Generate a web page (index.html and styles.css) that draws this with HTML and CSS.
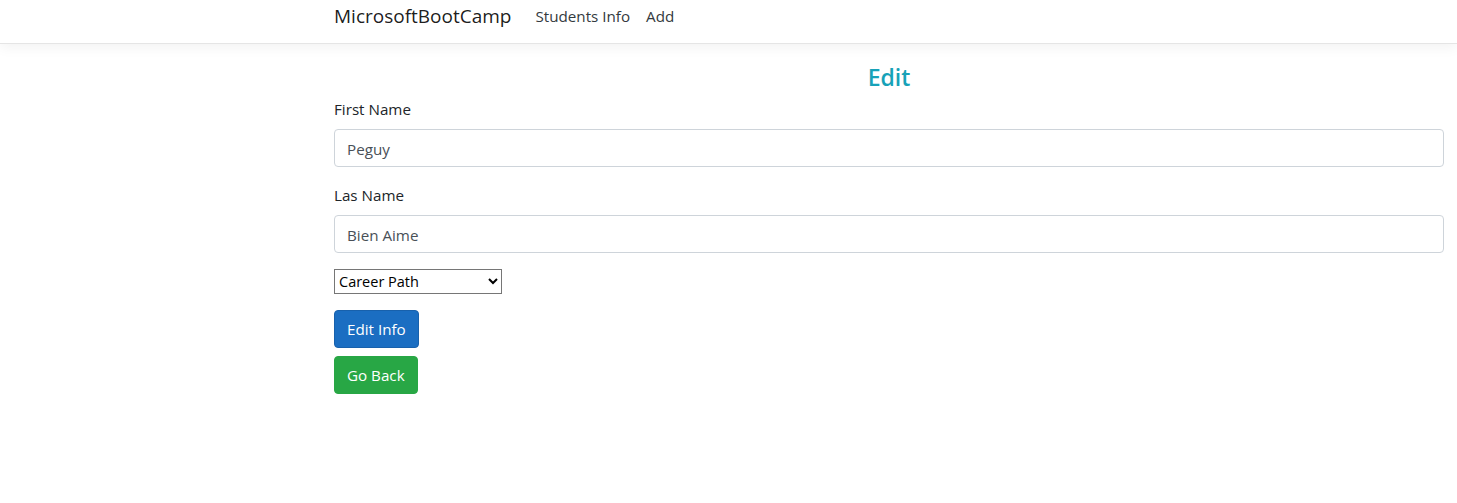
FILE: index.html
```html
<!DOCTYPE html>
<html lang="en">
<head>
<meta charset="utf-8">
<title>Edit - MicrosoftBootCamp</title>
<link rel="stylesheet" href="styles.css">
</head>
<body>
<header class="navbar">
  <div class="container nav-inner">
    <a class="brand" href="#">MicrosoftBootCamp</a>
    <nav class="nav-links">
      <a class="nav-link" href="#">Students Info</a>
      <a class="nav-link" href="#">Add</a>
    </nav>
  </div>
</header>
<main class="container">
  <h4 class="title">Edit</h4>
  <form class="form">
    <div class="form-group">
      <label class="label" for="fn">First Name</label>
      <input class="control" id="fn" type="text" value="Peguy">
    </div>
    <div class="form-group">
      <label class="label" for="ln">Las Name</label>
      <input class="control" id="ln" type="text" value="Bien Aime">
    </div>
    <div class="form-group">
      <select class="select">
        <option>Career Path</option>
      </select>
    </div>
    <div class="actions">
      <button class="btn btn-primary" type="button">Edit Info</button>
      <button class="btn btn-success" type="button">Go Back</button>
    </div>
  </form>
</main>
</body>
</html>
```
FILE: styles.css
```css
html, body {
  overflow-x: hidden;
}
body {
  margin: 0;
  font-family: "Open Sans", "Noto Sans", sans-serif;
  font-size: 15.2px;
  line-height: 24px;
  color: #212529;
  background: #fff;
}
.container {
  box-sizing: border-box;
  width: 1140px;
  margin-left: 319px;
  padding: 0 15px;
}
.navbar {
  background: #fff;
  border-bottom: 1px solid #e5e5e5;
  box-shadow: 0 4px 12px rgba(0, 0, 0, 0.05);
  height: 44px;
  box-sizing: border-box;
}
.nav-inner {
  display: flex;
  align-items: center;
  height: 100%;
  padding-bottom: 12px;
}
.brand {
  font-size: 19px;
  line-height: 30px;
  color: rgba(0, 0, 0, 0.9);
  text-decoration: none;
  margin-right: 16px;
}
.nav-links {
  display: flex;
}
.nav-link {
  padding: 0 8px;
  color: #343a40;
  text-decoration: none;
}
.title {
  margin: 16px 0 3px;
  font-size: 23px;
  font-weight: 600;
  line-height: 34px;
  color: #17a2b8;
  text-align: center;
}
.form {
  margin: 0;
}
.form-group {
  margin-bottom: 16px;
}
.label {
  display: inline-block;
  margin-bottom: 8px;
}
.control {
  display: block;
  box-sizing: border-box;
  width: 100%;
  height: 38px;
  padding: 6px 12px 5px;
  font: inherit;
  color: #495057;
  background: #fff;
  border: 1px solid #ced4da;
  border-radius: 4px;
}
.select {
  box-sizing: border-box;
  width: 168px;
  height: 25px;
  font-family: inherit;
  font-size: 14.5px;
  color: #000;
  background: #fff;
  border: 1px solid #767676;
  border-radius: 0;
}
.actions {
  display: flex;
  flex-direction: column;
  align-items: flex-start;
  gap: 8px;
}
.btn {
  box-sizing: border-box;
  height: 38px;
  padding: 6px 12px;
  font: inherit;
  color: #fff;
  border: 1px solid transparent;
  border-radius: 4px;
  cursor: pointer;
}
.btn-primary {
  background: #1b6ec2;
  border-color: #1861ac;
}
.btn-success {
  background: #28a745;
  border-color: #28a745;
}
```
